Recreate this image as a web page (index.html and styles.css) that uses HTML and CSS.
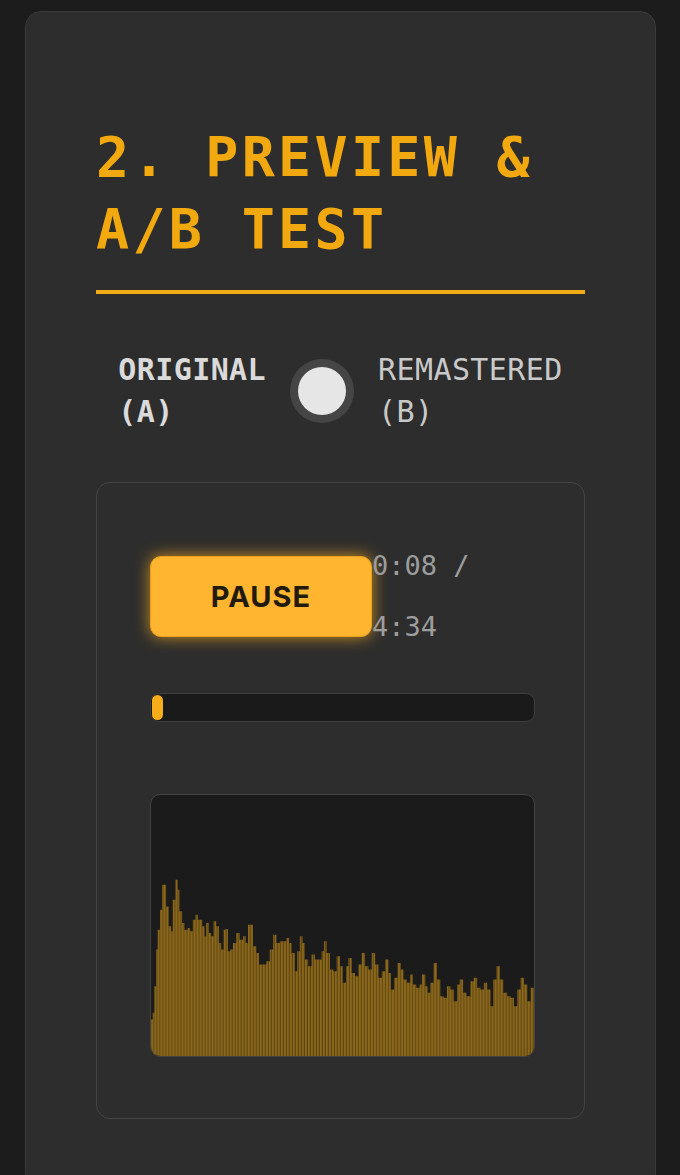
FILE: index.html
```html
<!DOCTYPE html>
<html lang="en">
<head>
<meta charset="utf-8">
<title>Preview &amp; A/B Test</title>
<link rel="stylesheet" href="styles.css">
</head>
<body>
<section class="card">
  <h2 class="title">2. PREVIEW &amp; A/B TEST</h2>
  <div class="ab-row">
    <span class="ab-label ab-active">ORIGINAL (A)</span>
    <button class="ab-toggle" aria-label="Toggle A/B"><span class="knob"></span></button>
    <span class="ab-label">REMASTERED (B)</span>
  </div>
  <div class="player">
    <div class="controls">
      <button class="play-btn">PAUSE</button>
      <span class="time">0:08 / 4:34</span>
    </div>
    <div class="progress"><div class="progress-fill" style="width:3%"></div></div>
    <div class="wave">
      <svg class="wave-svg" viewBox="35 45 1145 785" preserveAspectRatio="none">
        <defs>
          <pattern id="stripes" patternUnits="userSpaceOnUse" width="9" height="20">
            <rect x="0" y="0" width="9" height="20" fill="#5c4411"/>
            <rect x="0" y="0" width="6" height="20" fill="#8a671c"/>
          </pattern>
        </defs>
        <path fill="url(#stripes)" d="M35,830 V720 H40 V700 H45 V620 H50 V510 H55 V450 H62 V390 H68 V315 H75 V315 H80 V380 H88 V440 H95 V455 H100 V360 H108 V300 H115 V330 H120 V395 H128 V430 H135 V450 H145 V445 H152 V455 H160 V420 H168 V405 H175 V420 H182 V420 H188 V440 H195 V470 H200 V430 H208 V460 H215 V470 H222 V425 H230 V440 H238 V490 H245 V510 H252 V450 H258 V448 H265 V515 H272 V510 H280 V490 H290 V460 H300 V480 H310 V470 H318 V490 H325 V435 H332 V435 H340 V500 H350 V520 H358 V555 H370 V555 H380 V545 H390 V510 H400 V465 H410 V490 H420 V485 H430 V485 H440 V475 H448 V490 H455 V520 H465 V575 H472 V515 H480 V470 H488 V490 H495 V540 H505 V560 H515 V525 H525 V540 H535 V540 H545 V515 H552 V485 H560 V520 H570 V570 H580 V575 H590 V530 H600 V560 H608 V610 H618 V560 H625 V535 H635 V580 H645 V590 H655 V555 H665 V520 H675 V560 H685 V570 H695 V520 H705 V555 H715 V595 H725 V575 H735 V540 H745 V580 H752 V630 H762 V595 H772 V550 H782 V570 H790 V600 H800 V610 H810 V585 H818 V615 H828 V625 H838 V615 H845 V585 H855 V620 H862 V640 H870 V610 H880 V550 H890 V600 H900 V650 H910 V655 H920 V620 H930 V630 H940 V665 H950 V615 H958 V600 H968 V640 H978 V650 H990 V605 H1000 V595 H1010 V625 H1020 V630 H1030 V610 H1040 V630 H1050 V680 H1058 V600 H1068 V560 H1078 V600 H1088 V640 H1100 V650 H1110 V655 H1120 V680 H1130 V630 H1140 V595 H1150 V615 H1160 V665 H1170 V625 H1180 V830 Z"/>
      </svg>
    </div>
  </div>
</section>
</body>
</html>
```

FILE: styles.css
```css
* { box-sizing: border-box; }

html, body {
  margin: 0;
  padding: 0;
  background: #1c1c1c;
}

body {
  padding: 11px 24px 0 25px;
  font-family: "DejaVu Sans Mono", "Liberation Mono", monospace;
}

.card {
  background: #2d2d2d;
  border: 1px solid #3a3a3a;
  border-radius: 16px;
  padding: 110px 70px 70px 70px;
}

.title {
  margin: 0;
  font-family: "DejaVu Sans Mono", monospace;
  font-weight: 700;
  font-size: 55px;
  line-height: 1.3;
  letter-spacing: 3.3px;
  color: #f2a90f;
  padding-bottom: 25px;
  border-bottom: 4px solid #f2aa14;
}

.ab-row {
  margin-top: 55px;
  display: flex;
  justify-content: center;
  align-items: center;
  gap: 24px;
}

.ab-label {
  width: min-content;
  font-size: 30px;
  line-height: 42px;
  letter-spacing: 0.4px;
  color: #c9c9c9;
}

.ab-active {
  font-weight: 700;
  color: #dadada;
}

.ab-toggle {
  flex-shrink: 0;
  width: 64px;
  height: 64px;
  border-radius: 50%;
  border: none;
  padding: 8px;
  margin: 0;
  background: #454545;
  display: flex;
  align-items: center;
  justify-content: center;
}

.knob {
  display: block;
  width: 48px;
  height: 48px;
  border-radius: 50%;
  background: #e6e6e6;
}

.player {
  margin-top: 49px;
  border: 1px solid #444;
  border-radius: 14px;
  padding: 52px 49px 61px 53px;
  display: flex;
  flex-direction: column;
}

.controls {
  display: flex;
  align-items: center;
}

.play-btn {
  flex-shrink: 0;
  width: 222px;
  height: 81px;
  margin: 0;
  border: 1px solid #e9a01c;
  border-radius: 11px;
  background: #ffb530;
  box-shadow: 0 0 16px rgba(255, 176, 30, 0.75);
  font-family: "Inter", "Liberation Sans", sans-serif;
  font-weight: 700;
  font-size: 29px;
  letter-spacing: 1px;
  color: #231a0e;
}

.time {
  font-size: 27px;
  line-height: 61px;
  color: #9d9d9d;
}

.progress {
  margin-top: 36px;
  height: 29px;
  background: #1a1a1a;
  border: 1px solid #3e3e3e;
  border-radius: 9px;
  padding: 1px;
  display: flex;
}

.progress-fill {
  min-width: 11px;
  height: 100%;
  background: #f7ad1a;
  border-radius: 6px;
}

.wave {
  margin-top: 72px;
  height: 263px;
  background: #1b1b1b;
  border: 1px solid #444;
  border-radius: 10px;
  overflow: hidden;
}

.wave-svg {
  display: block;
  width: 100%;
  height: 100%;
}
```
